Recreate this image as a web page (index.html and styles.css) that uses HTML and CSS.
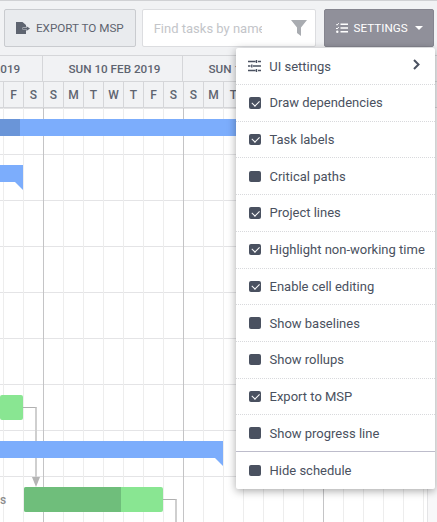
FILE: index.html
```html
<!DOCTYPE html>
<html lang="en">
<head>
<meta charset="utf-8">
<title>Gantt settings</title>
<link rel="stylesheet" href="styles.css">
</head>
<body>
<div class="app">
  <div class="toolbar">
    <button class="btn btn-export">
      <svg class="ico" width="14" height="12" viewBox="0 0 14 12"><path d="M0 0h6.500L10 3v2.500H6.500v2H10V12H0z" fill="#5e6470"/><path d="M6.800 5.900h3.700V4.200L14 6.500l-3.500 2.400V7.200H6.800z" fill="#5e6470"/></svg>
      EXPORT TO MSP
    </button>
    <div class="search">
      <span class="search-text">Find tasks by name</span>
      <svg class="funnel" width="16" height="16" viewBox="0 0 16 16"><path d="M0 0h16L10 7.500V16L6 13V7.500z" fill="#a9acb1"/></svg>
    </div>
    <button class="btn btn-settings">
      <svg class="ico" width="12" height="10" viewBox="0 0 12 10"><path d="M4.500 .5H12v1.500H4.500zM4.500 4.250H12v1.500H4.500zM4.500 8H12v1.500H4.500z" fill="#fff"/><path d="M0 1.200l1 1 1.800-2M0 5l1 1 1.800-2" stroke="#fff" stroke-width="1" fill="none"/><circle cx="1.300" cy="8.700" r="1.200" fill="#fff"/></svg>
      SETTINGS
      <span class="caret"></span>
    </button>
  </div>
  <div class="gantt-head">
    <div class="weeks">
      <div class="week week-first">SUN 3 FEB 2019</div>
      <div class="week">SUN 10 FEB 2019</div>
      <div class="week">SUN 17 FEB 2019</div>
    </div>
    <div class="days">
      <div class="day">F</div><div class="day">S</div>
      <div class="day">S</div><div class="day">M</div><div class="day">T</div><div class="day">W</div><div class="day">T</div><div class="day">F</div><div class="day">S</div>
      <div class="day">S</div><div class="day">M</div><div class="day">T</div><div class="day">W</div><div class="day">T</div><div class="day">F</div><div class="day">S</div>
      <div class="day">S</div><div class="day">M</div><div class="day">T</div><div class="day">W</div><div class="day">T</div>
    </div>
  </div>
  <div class="canvas">
    <div class="dep dep-a"></div>
    <div class="dep dep-b"></div>
    <div class="arrow"></div>
    <div class="bar parent parent-top"><div class="bar-progress"></div></div>
    <div class="bar parent parent-short"></div>
    <div class="bar task task-a"></div>
    <div class="bar parent parent-long"></div>
    <div class="bar task task-b"><div class="task-progress"></div></div>
    <span class="task-label">s</span>
    <div class="vscroll"></div>
  </div>
  <div class="menu">
    <div class="item">
      <svg class="item-ico" width="13" height="12" viewBox="0 0 13 12"><path d="M0 1.500h7.500M10 1.500h3M0 6h2.500M5 6h8M0 10.500h7.500M10 10.500h3M8.500 0v3M3.800 4.500v3M8.500 9v3" stroke="#4a5160" stroke-width="1.400" fill="none"/></svg>
      <span class="item-text">UI settings</span>
      <svg class="chev" width="7" height="11" viewBox="0 0 7 11"><path d="M1 1l4.500 4.500L1 10" stroke="#4a5160" stroke-width="2" fill="none"/></svg>
    </div>
    <div class="item"><span class="box on"></span><span class="item-text">Draw dependencies</span></div>
    <div class="item"><span class="box on"></span><span class="item-text">Task labels</span></div>
    <div class="item"><span class="box"></span><span class="item-text">Critical paths</span></div>
    <div class="item"><span class="box on"></span><span class="item-text">Project lines</span></div>
    <div class="item"><span class="box on"></span><span class="item-text">Highlight non-working time</span></div>
    <div class="item"><span class="box on"></span><span class="item-text">Enable cell editing</span></div>
    <div class="item"><span class="box"></span><span class="item-text">Show baselines</span></div>
    <div class="item"><span class="box"></span><span class="item-text">Show rollups</span></div>
    <div class="item"><span class="box on"></span><span class="item-text">Export to MSP</span></div>
    <div class="item item-last"><span class="box"></span><span class="item-text">Show progress line</span></div>
    <div class="item item-end"><span class="box"></span><span class="item-text">Hide schedule</span></div>
  </div>
</div>
</body>
</html>
```
FILE: styles.css
```css
* { box-sizing: border-box; }
html, body { margin: 0; padding: 0; }
body { width: 437px; height: 522px; overflow: hidden; background: #fff; font-family: Roboto, "Liberation Sans", sans-serif; }
.app { position: relative; width: 437px; height: 522px; overflow: hidden; display: flex; flex-direction: column; }

.toolbar { flex: none; height: 56px; padding: 8px 3px 0 4px; display: flex; gap: 6px; background: #f1f2f4; border-top: 1px solid #d0d1d4; border-bottom: 1px solid #d5d6d9; align-items: flex-start; }
.btn { height: 38px; padding: 0; display: flex; align-items: center; justify-content: center; gap: 6px; font: 400 11.700px Roboto, sans-serif; border-radius: 2px; }
.btn-export { width: 132px; background: #e9ebee; border: 1px solid #c9cbcf; color: #5e6470; }
.search { width: 175px; height: 38px; display: flex; align-items: center; justify-content: space-between; padding: 0 8px 0 11px; background: #fff; border: 1px solid #dcdde0; border-radius: 2px; }
.search-text { font-size: 13px; color: #c3c5c9; width: 108px; overflow: hidden; white-space: nowrap; }
.btn-settings { width: 110px; margin-left: 2px; background: #90909a; border: 1px solid #85858f; color: #fff; }
.caret { width: 0; height: 0; border-left: 4px solid transparent; border-right: 4px solid transparent; border-top: 4px solid #fff; margin-left: 1px; }

.gantt-head { flex: none; height: 52px; background: #f1f2f4; border-bottom: 1px solid #d5d6d9; overflow: hidden; font-weight: 500; color: #5e6470; font-size: 12px; }
.weeks { display: flex; height: 26px; margin-left: -97px; border-bottom: 1px solid #d5d6d9; font-size: 11.700px; }
.week { flex: none; width: 140px; padding-left: 4px; border-right: 1px solid #d5d6d9; display: flex; align-items: center; justify-content: center; }
.week-first { padding-left: 10px; }
.days { display: flex; height: 26px; margin-left: 3px; }
.day { flex: none; width: 20px; border-left: 1px solid #d5d6d9; display: flex; align-items: center; justify-content: center; }

.canvas { flex: 1; position: relative; overflow: hidden;
  background-color: #fff;
  background-image:
    linear-gradient(90deg, transparent 43px, #c4c4c6 43px, #c4c4c6 44px, transparent 44px),
    linear-gradient(90deg, transparent 3px, #ededed 3px, #ededed 4px, transparent 4px),
    linear-gradient(180deg, transparent 45px, #e4e4e6 45px);
  background-size: 140px 100%, 20px 100%, 100% 46px;
  background-position: 0 0, 0 0, 0 1px;
  background-repeat: repeat;
}
.bar { position: absolute; }
.parent { background: #7cadfc; height: 17px; }
.parent-top { left: 0; width: 240px; top: 11px; }
.bar-progress { width: 20px; height: 100%; background: #6a95d8; }
.parent-short { left: 0; width: 23px; top: 57px; }
.parent-long { left: 0; width: 223px; top: 333px; }
.parent-short::after, .parent-long::after { content: ""; position: absolute; right: 0; top: 17px; border-top: 8px solid #7cadfc; border-left: 8px solid transparent; }
.task { background: #89e692; height: 25px; border-radius: 2px; }
.task-a { left: 0; width: 23px; top: 287px; }
.task-b { left: 24px; width: 139px; top: 379px; overflow: hidden; }
.task-progress { width: 97px; height: 100%; background: #6fbe7b; }
.task-label { position: absolute; left: 0; top: 385px; font-size: 12px; font-weight: 500; color: #8b8b8b; }
.dep { position: absolute; border-top: 1px solid #b0b0b0; border-right: 2px solid #cfcfcf; }
.dep-a { left: 23px; top: 299px; width: 14px; height: 70px; }
.dep-b { left: 163px; top: 391px; width: 14px; height: 40px; }
.arrow { position: absolute; left: 32px; top: 369px; border-top: 10px solid #b5b5b5; border-left: 4px solid transparent; border-right: 4px solid transparent; }
.vscroll { position: absolute; right: 0; top: 0; bottom: 0; width: 10px; background: #f8f8f9; border-left: 1px solid #e4e4e6; }

.menu { position: absolute; left: 236px; top: 48.400px; width: 199px; background: #fff; border-radius: 2px; box-shadow: 0 2px 8px rgba(0,0,0,.35); display: flex; flex-direction: column; color: #4a5160; font-size: 13px; }
.item { height: 36.700px; display: flex; align-items: center; padding-left: 13px; gap: 9px; border-bottom: 1px dotted #d8d9dc; position: relative; }
.item-last { border-bottom: 1px solid #bdbccb; }
.item-end { border-bottom: 0; }
.item-text { white-space: nowrap; }
.item-ico { flex: none; margin-right: -0.700px; margin-left: -1px; }
.chev { position: absolute; right: 15px; top: 10.500px; }
.box { flex: none; width: 11.500px; height: 11.500px; background: #4a5160; border-radius: 2px; position: relative; }
.box.on::after { content: ""; position: absolute; left: 2.800px; top: 2.500px; width: 6px; height: 3.500px; border-left: 1.500px solid #fff; border-bottom: 1.500px solid #fff; transform: rotate(-45deg); }
```
